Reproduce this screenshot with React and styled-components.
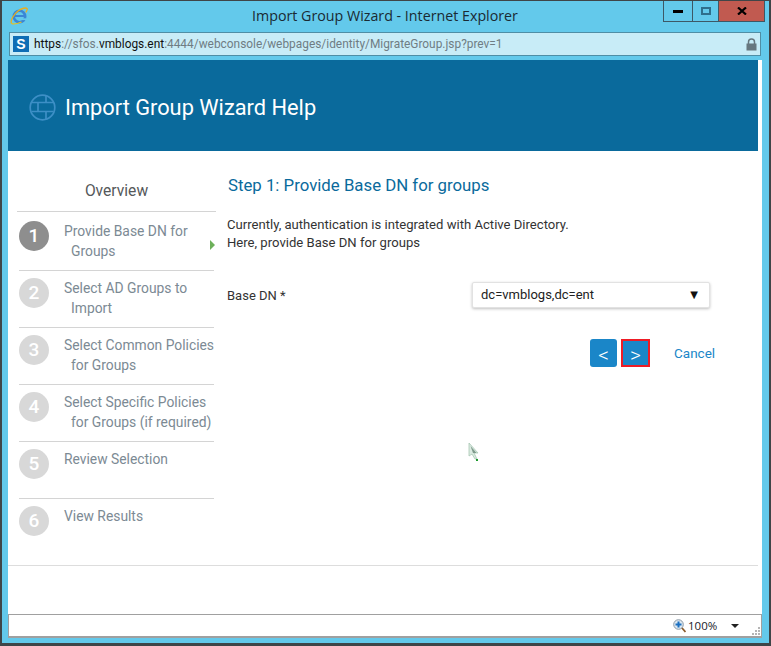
import React from "react";
import styled, { createGlobalStyle } from "styled-components";

const Global = createGlobalStyle`
  html, body { margin: 0; padding: 0; background: #63c9eb; }
  * { box-sizing: border-box; }
`;

const Win = styled.div`
  width: 771px; height: 646px; overflow: hidden; position: relative;
  display: flex; flex-direction: column;
  background: #63c9eb;
  border: solid #3f4548; border-width: 1px 2px 3px 2px;
  padding: 0 7px 0 6px;
`;
const TitleBar = styled.div`
  height: 31px; flex: none; display: flex; align-items: flex-start; position: relative;
  margin: 0 -6px;
  padding: 6px 0 0 8px;
`;
const Title = styled.div`
  position: absolute; left: 250px; top: 6px;
  font: 14.25px/18px "Open Sans", sans-serif; color: #1a2a33; white-space: nowrap;
`;
const Controls = styled.div`
  position: absolute; top: 0; left: 661px; display: flex; height: 21px;
  border: 1px solid #3d5866; border-top: none;
`;
const Ctl = styled.div`
  width: ${p => p.$w}px; height: 20px; display: flex; align-items: center; justify-content: center;
  background: ${p => p.$bg || "transparent"};
  border-left: ${p => p.$sep ? "1px solid #3d5866" : "none"};
`;
const Address = styled.div`
  height: 24px; flex: none; margin: 0 1px 0 1px; display: flex; align-items: center;
  background: #c8ecf7; border: 1px solid #4f8ea5; padding: 0 3px 0 3px;
`;
const Fav = styled.div`
  width: 16px; height: 16px; background: #0f6eb5; color: #fff; flex: none;
  display: flex; align-items: center; justify-content: center;
  font: 700 14px/16px "Liberation Sans", sans-serif;
`;
const Url = styled.div`
  margin-left: 5px; font: 11.9px/16px Roboto, sans-serif; color: #6f7d84; white-space: nowrap; flex: 1;
  b { font-weight: 400; color: #111; }
`;
const Gap = styled.div`height: 4px; flex: none;`;
const Page = styled.div`
  height: 554px; flex: none; background: #fff; display: flex; flex-direction: column;
`;
const Header = styled.div`
  height: 91px; flex: none; margin-right: 4px; background: #0a6a9c;
  display: flex; align-items: center; padding: 3px 0 0 21px; gap: 9px;
`;
const HeaderTitle = styled.h1`
  margin: 2px 0 0; color: #fff; font: 400 21.8px/28px Roboto, sans-serif;
`;
const Body = styled.div`
  flex: none; height: 415px; display: flex; border-bottom: 1px solid #ddd; margin-right: 4px;
`;
const Side = styled.div`
  width: 199px; flex: none; margin-left: 9px;
`;
const Overview = styled.div`
  height: 61px; padding-top: 30px; border-bottom: 1px solid #d4d4d4; text-align: center;
  font: 15.6px/20px Roboto, sans-serif; color: #55585a;
`;
const Step = styled.div`
  height: ${p => p.$h}px; margin: 0 2px; padding: ${p => p.$first ? 9 : 7}px 0 0 0; display: flex; position: relative;
  border-bottom: ${p => p.$last ? "none" : "1px solid #d4d4d4"};
`;
const Num = styled.div`
  width: 30px; height: 30px; border-radius: 50%; flex: none;
  margin: 0 15px 0 0;
  background: ${p => p.$active ? "#8e8e8e" : "#d8d8d8"}; color: #fff;
  font: 500 19px/30px Roboto, sans-serif; text-align: center;
`;
const StepText = styled.div`
  font: 13.85px/20px Roboto, sans-serif; color: #7c8a94; white-space: nowrap;
  span { display: block; padding-left: 7px; }
`;
const Arrow = styled.div`
  position: absolute; left: 191px; top: 28px; width: 0; height: 0;
  border-left: 5px solid #6db05a; border-top: 5px solid transparent; border-bottom: 5px solid transparent;
`;
const Main = styled.div`
  flex: 1; padding: 24px 0 0 11px; position: relative;
`;
const StepTitle = styled.h2`
  margin: 0 0 0 1px; font: 400 16.8px/20px Roboto, sans-serif; color: #0a6a9c;
`;
const Para = styled.p`
  margin: 21px 0 0; font: 13.1px/18px Roboto, sans-serif; color: #333;
`;
const Row = styled.div`
  margin-top: 30px; display: flex; align-items: center; font: 13px/18px Roboto, sans-serif; color: #333;
`;
const Label = styled.div`width: 245px; padding-top: 1px;`;
const Select = styled.div`
  width: 238px; height: 26px; background: #fff; border: 1px solid #e2e2e2; border-radius: 2px;
  box-shadow: 0 1px 3px rgba(0,0,0,.25); display: flex; align-items: center; justify-content: space-between;
  padding: 0 11px 0 8px; color: #222; font: 13px/18px Roboto, sans-serif;
  i { font-style: normal; font-size: 10px; color: #111; font-family: "DejaVu Sans", sans-serif; }
`;
const Actions = styled.div`
  margin-top: 31px; display: flex; align-items: center; margin-left: 363px;
`;
const Btn = styled.div`
  width: ${p => p.$focus ? 29 : 27}px; height: 28px; background: #1a86c8; color: #fff; border-radius: ${p => p.$focus ? 0 : 3}px;
  border: ${p => p.$focus ? "2px solid #ee1c25" : "none"};
  margin-left: ${p => p.$focus ? 4 : 0}px;
  display: flex; align-items: center; justify-content: center; padding-top: 3px;
  font: 300 21px/22px Roboto, sans-serif;
`;
const Cancel = styled.div`
  margin-left: 24px; font: 13.5px/18px Roboto, sans-serif; color: #1a86c8;
`;
const Cursor = styled.svg`
  position: absolute; left: 466px; top: 441px;
`;
const Foot = styled.div`flex: 1;`;
const Status = styled.div`
  height: 24px; flex: none; background: #fff;
  border: solid #a0a0a0; border-width: 1px 1px 2px 1px; display: flex; align-items: center;
  font: 11.5px/16px "Open Sans", sans-serif; color: #1a1a2a; padding-left: 664px;
`;
const Caret = styled.div`
  width: 0; height: 0; margin-left: 14px; margin-top: 1px;
  border-top: 4px solid #222; border-left: 4px solid transparent; border-right: 4px solid transparent;
`;
const Grip = styled.svg`
  margin-left: auto; margin-top: 12px; flex: none;
`;

const Ie = () => (
  <svg width="18" height="18" viewBox="0 0 18 18">
    <circle cx="9.500" cy="9.500" r="5.700" fill="none" stroke="#3a86d6" strokeWidth="2.600"/>
    <path d="M5 9h9.500" stroke="#3a86d6" strokeWidth="2"/>
    <path d="M11 12.200h5" stroke="#63c9eb" strokeWidth="1.800"/>
    <path d="M1.500 16.500C0 13.500 4 7 8 4c4-3 8-3.500 9-2.500.7.800-.2 2.500-1.200 4" fill="none" stroke="#e9ad1e" strokeWidth="1.300"/>
    <path d="M1.500 16.500c2 1 6 .3 10-1.500" fill="none" stroke="#e9c21e" strokeWidth="1.100"/>
  </svg>
);
const Brick = () => (
  <svg width="27" height="27" viewBox="0 0 27 27" fill="none" stroke="#3d8fc6" strokeWidth="1.700">
    <circle cx="13.500" cy="13.500" r="12.300"/>
    <path d="M2.500 8.500h22M2.500 17.500h22M17 1.500v7M9 8.500v9M17 17.500v8"/>
  </svg>
);
const Lock = () => (
  <svg width="11" height="13" viewBox="0 0 11 13">
    <path d="M2.500 6V4a3 3 0 0 1 6 0v2" fill="none" stroke="#66777f" strokeWidth="1.500"/>
    <rect x="0.500" y="5.500" width="10" height="7" fill="#66777f"/>
  </svg>
);
const Zoom = () => (
  <svg width="13" height="14" viewBox="0 0 13 14" style={{ marginRight: 2 }}>
    <circle cx="5.500" cy="5.500" r="4.800" fill="#dbe7f1" stroke="#8b99a5"/>
    <path d="M5.500 2.500v6M2.500 5.500h6" stroke="#1a6fc0" strokeWidth="2"/>
    <path d="M9 9l3.500 4" stroke="#8a5a2a" strokeWidth="1.800"/>
  </svg>
);

const steps = [
  ["Provide Base DN for", "Groups", 59],
  ["Select AD Groups to", "Import", 57],
  ["Select Common Policies", "for Groups", 57],
  ["Select Specific Policies", "for Groups (if required)", 57],
  ["Review Selection", "", 57],
  ["View Results", "", 60],
];

export default function App() {
  return (
    <>
      <Global />
      <Win>
        <TitleBar>
          <Ie />
          <Title>Import Group Wizard - Internet Explorer</Title>
          <Controls>
            <Ctl $w={28}><svg width="10" height="3"><rect width="10" height="3" fill="#000"/></svg></Ctl>
            <Ctl $w={26} $sep><svg width="10" height="8"><rect x="1" y="1" width="8" height="6" fill="none" stroke="#2f6f8c" strokeWidth="2"/></svg></Ctl>
            <Ctl $w={46} $bg="#c15a50" $sep><svg width="10" height="8" viewBox="0 0 10 8"><path d="M1 0.500l8 7M9 0.500l-8 7" stroke="#000" strokeWidth="2.200"/></svg></Ctl>
          </Controls>
        </TitleBar>
        <Address>
          <Fav>S</Fav>
          <Url><b>https</b>://sfos.<b>vmblogs.ent</b>:4444/webconsole/webpages/identity/MigrateGroup.jsp?prev=1</Url>
          <Lock />
        </Address>
        <Gap />
        <Page>
          <Header><Brick /><HeaderTitle>Import Group Wizard Help</HeaderTitle></Header>
          <Body>
            <Side>
              <Overview>Overview</Overview>
              {steps.map(([a, b, h], i) => (
                <Step key={i} $h={h} $first={i === 0} $last={i === 5}>
                  <Num $active={i === 0}>{i + 1}</Num>
                  <StepText>{a}{b && <span>{b}</span>}</StepText>
                  {i === 0 && <Arrow />}
                </Step>
              ))}
            </Side>
            <Main>
              <StepTitle>Step 1: Provide Base DN for groups</StepTitle>
              <Para>Currently, authentication is integrated with Active Directory.<br />Here, provide Base DN for groups</Para>
              <Row>
                <Label>Base DN *</Label>
                <Select>dc=vmblogs,dc=ent<i>▼</i></Select>
              </Row>
              <Actions>
                <Btn>&lt;</Btn>
                <Btn $focus>&gt;</Btn>
                <Cancel>Cancel</Cancel>
              </Actions>
            </Main>
          </Body>
          <Foot />
        </Page>
        <Status>
          <Zoom />100%<Caret />
          <Grip width="9" height="9" viewBox="0 0 9 9" fill="#b5b5b5">
            <rect x="6" y="0" width="2" height="2"/><rect x="3" y="3" width="2" height="2"/><rect x="6" y="3" width="2" height="2"/>
            <rect x="0" y="6" width="2" height="2"/><rect x="3" y="6" width="2" height="2"/><rect x="6" y="6" width="2" height="2"/>
          </Grip>
        </Status>
        <Cursor width="12" height="20" viewBox="0 0 12 20">
          <path d="M1 1v13l3-2 3 5h2L6 11h4z" fill="#dcebe2" stroke="#a8c8b4" strokeWidth=".8"/>
          <path d="M2.500 4l6 7H5z" fill="#7f9a8c"/>
          <rect x="8" y="17" width="2" height="2" fill="#1c9a2c"/>
        </Cursor>
      </Win>
    </>
  );
}
